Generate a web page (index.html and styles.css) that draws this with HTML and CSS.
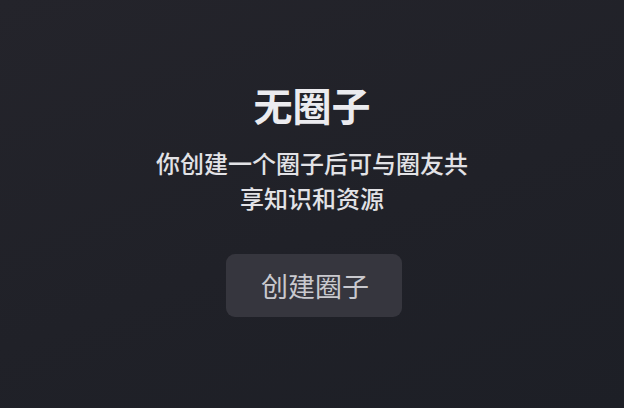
FILE: index.html
```html
<!DOCTYPE html>
<html lang="zh-CN">
<head>
<meta charset="utf-8">
<title>无圈子</title>
<link rel="stylesheet" href="styles.css">
</head>
<body>
<main class="empty">
  <h1 class="empty-title">无圈子</h1>
  <p class="empty-desc">你创建一个圈子后可与圈友共享知识和资源</p>
  <button class="empty-btn" type="button">创建圈子</button>
</main>
</body>
</html>
```
FILE: styles.css
```css
html, body {
  margin: 0;
  padding: 0;
  width: 624px;
  height: 408px;
  overflow: hidden;
}
body {
  background: linear-gradient(160deg, #24242b 0%, #202128 55%, #1d1f26 100%);
  font-family: "Noto Sans CJK SC", "Noto Sans", sans-serif;
}
.empty {
  display: flex;
  flex-direction: column;
  align-items: center;
  padding-top: 85px;
}
.empty-title {
  margin: 0;
  font-size: 39px;
  line-height: 39px;
  font-weight: 700;
  color: #ebebef;
}
.empty-desc {
  margin: 21px 0 0;
  width: 314px;
  font-size: 24px;
  line-height: 35px;
  font-weight: 500;
  color: #e2e2e6;
  text-align: center;
}
.empty-btn {
  margin: 39px 0 0 4px;
  width: 176px;
  height: 63px;
  border: none;
  border-radius: 9px;
  background: #36363e;
  color: #c9c9ce;
  font-family: inherit;
  font-size: 27px;
  padding: 0 0 0 2px;
}
```
